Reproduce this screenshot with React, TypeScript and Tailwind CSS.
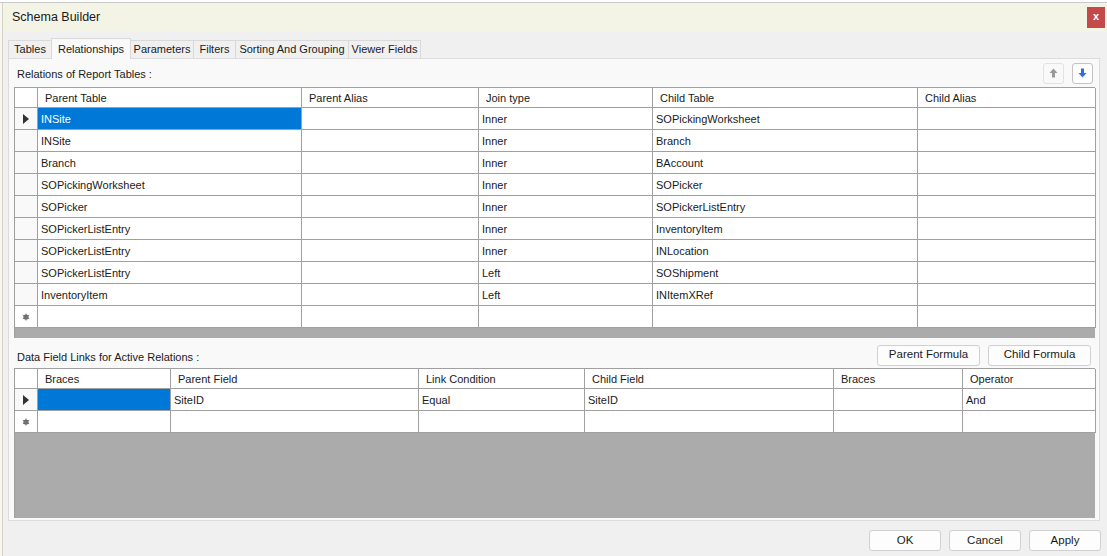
import React from "react";

const F = { fontFamily: '"Liberation Sans", Arial, sans-serif' };

const rel = [
  ["INSite", "", "Inner", "SOPickingWorksheet", ""],
  ["INSite", "", "Inner", "Branch", ""],
  ["Branch", "", "Inner", "BAccount", ""],
  ["SOPickingWorksheet", "", "Inner", "SOPicker", ""],
  ["SOPicker", "", "Inner", "SOPickerListEntry", ""],
  ["SOPickerListEntry", "", "Inner", "InventoryItem", ""],
  ["SOPickerListEntry", "", "Inner", "INLocation", ""],
  ["SOPickerListEntry", "", "Left", "SOShipment", ""],
  ["InventoryItem", "", "Left", "INItemXRef", ""],
];

function Tri() {
  return (
    <svg width="6" height="10" viewBox="0 0 6 10">
      <path d="M0 0 L6 5 L0 10 Z" fill="#333" />
    </svg>
  );
}

function Star() {
  return (
    <svg width="8" height="8" viewBox="0 0 8 8">
      <circle cx="4" cy="4" r="2.6" fill="#666" />
      <path d="M4 0.5 V7.5 M0.8 2.2 L7.2 5.8 M0.8 5.8 L7.2 2.2" stroke="#777" strokeWidth="1" />
    </svg>
  );
}

function Grid({
  cols,
  headers,
  rows,
  grayH,
}: {
  cols: number[];
  headers: string[];
  rows: string[][];
  grayH: number;
}) {
  return (
    <div className="flex flex-col border-l border-t border-[#a0a0a0] bg-[#ababab]" style={{ width: 1081 }}>
      <div className="flex h-[20px] bg-white">
        <div className="border-r border-b border-[#a0a0a0] shrink-0" style={{ width: cols[0] }} />
        {headers.map((h, i) => (
          <div
            key={i}
            className="border-r border-b border-[#a0a0a0] shrink-0 flex items-center pl-[7px] pt-[1px] text-[11px] text-[#1a1a1a]"
            style={{ width: cols[i + 1] }}
          >
            {h}
          </div>
        ))}
      </div>
      {rows.map((r, ri) => (
        <div key={ri} className="flex h-[22px] bg-white">
          <div
            className="border-r border-b border-[#a0a0a0] shrink-0 flex items-center justify-center bg-[#f9f9f9]"
            style={{ width: cols[0] }}
          >
            {ri === 0 ? <Tri /> : null}
          </div>
          {r.map((c, ci) => (
            <div
              key={ci}
              className={
                "border-r border-b border-[#a0a0a0] shrink-0 flex items-center pl-[3px] pt-[2px] text-[11px] " +
                (ri === 0 && ci === 0 ? "bg-[#0078d7] text-white" : "text-[#1a1a1a]")
              }
              style={{ width: cols[ci + 1] }}
            >
              {c}
            </div>
          ))}
        </div>
      ))}
      <div className="flex h-[22px] bg-white">
        <div
          className="border-r border-b border-[#a0a0a0] shrink-0 flex items-center justify-center"
          style={{ width: cols[0] }}
        >
          <Star />
        </div>
        {headers.map((_, i) => (
          <div key={i} className="border-r border-b border-[#a0a0a0] shrink-0" style={{ width: cols[i + 1] }} />
        ))}
      </div>
      <div style={{ height: grayH }} />
    </div>
  );
}

function Btn({ label, w }: { label: string; w: number }) {
  return (
    <div
      className="h-[21px] flex items-center justify-center rounded-[3px] border border-[#d0d0d0] bg-[#fdfdfd] text-[11.5px] text-[#1a1a1a]"
      style={{ width: w }}
    >
      {label}
    </div>
  );
}

const tabs: [string, number][] = [
  ["Tables", 44],
  ["Relationships", 80],
  ["Parameters", 64],
  ["Filters", 43],
  ["Sorting And Grouping", 114],
  ["Viewer Fields", 73],
];

export default function App() {
  return (
    <div className="w-[1107px] h-[556px] bg-[#f7f7f7] overflow-hidden relative" style={F}>
      <div className="h-[3px] bg-[#fdfdfd] border-b border-[#c9c9c9]" />
      <div className="ml-[2px] h-[553px] flex flex-col bg-[#f0f0f0] border-l border-[#d5d2bd]">
        {/* title bar */}
        <div className="h-[29px] bg-[#f4f4e6] flex items-center justify-between pl-[9px] pr-[2px] shrink-0">
          <span className="text-[12.5px] text-[#1a1a1a]">Schema Builder</span>
          <div className="w-[18px] h-[21px] bg-[#c44a4a] flex items-center justify-center text-white text-[11px] font-bold leading-none pb-[2px]">
            x
          </div>
        </div>
        {/* tabs */}
        <div className="flex items-end h-[26px] pl-[5px] shrink-0 relative z-10">
          {tabs.map(([t, w], i) =>
            i === 1 ? (
              <div
                key={t}
                className="h-[21px] -mb-px -ml-px flex items-center justify-center bg-[#f9f9f9] border border-b-0 border-[#d9d9d9] text-[11px] text-[#1a1a1a] relative z-10"
                style={{ width: w }}
              >
                {t}
              </div>
            ) : (
              <div
                key={t}
                className="h-[18px] flex items-center justify-center bg-[#f0f0f0] border border-b-0 border-[#d9d9d9] -ml-px first:ml-0 text-[11px] text-[#1a1a1a]"
                style={{ width: w }}
              >
                {t}
              </div>
            )
          )}
        </div>
        {/* panel */}
        <div className="ml-[5px] w-[1092px] h-[463px] bg-[#f9f9f9] border border-[#dcdcdc] pl-[5px] flex flex-col shrink-0">
          <div className="h-[28px] flex items-center justify-between pr-[6px]">
            <span className="pl-[3px] text-[11px] text-[#1a1a1a] pt-[3px]">Relations of Report Tables :</span>
            <div className="flex gap-[8px]">
              <div className="w-[21px] h-[21px] rounded-[3px] border border-[#e2e2e2] bg-[#f9f9f9] flex items-center justify-center">
                <svg width="9" height="10" viewBox="0 0 9 10">
                  <path d="M4.5 0.5 L8.5 5 L6 5 L6 9.5 L3 9.5 L3 5 L0.5 5 Z" fill="#9a9a9a" />
                </svg>
              </div>
              <div className="w-[21px] h-[21px] rounded-[3px] border border-[#c3c3c3] bg-[#fdfdfd] flex items-center justify-center">
                <svg width="9" height="10" viewBox="0 0 9 10">
                  <path d="M4.5 9.5 L8.5 5 L6 5 L6 0.5 L3 0.5 L3 5 L0.5 5 Z" fill="#2f6fd6" />
                </svg>
              </div>
            </div>
          </div>
          <Grid
            cols={[23, 264, 177, 174, 265, 178]}
            headers={["Parent Table", "Parent Alias", "Join type", "Child Table", "Child Alias"]}
            rows={rel}
            grayH={10}
          />
          <div className="h-[30px] flex items-center justify-between pr-[8px] pt-[4px]">
            <span className="pl-[3px] text-[11px] text-[#1a1a1a] pt-[5px]">Data Field Links for Active Relations :</span>
            <div className="flex gap-[8px]">
              <Btn label="Parent Formula" w={103} />
              <Btn label="Child Formula" w={103} />
            </div>
          </div>
          <Grid
            cols={[23, 133, 248, 166, 249, 129, 133]}
            headers={["Braces", "Parent Field", "Link Condition", "Child Field", "Braces", "Operator"]}
            rows={[["", "SiteID", "Equal", "SiteID", "", "And"]]}
            grayH={85}
          />
        </div>
        {/* footer buttons */}
        <div className="flex justify-end gap-[8px] pr-[6px] pt-[9px]">
          <Btn label="OK" w={72} />
          <Btn label="Cancel" w={72} />
          <Btn label="Apply" w={72} />
        </div>
      </div>
    </div>
  );
}
